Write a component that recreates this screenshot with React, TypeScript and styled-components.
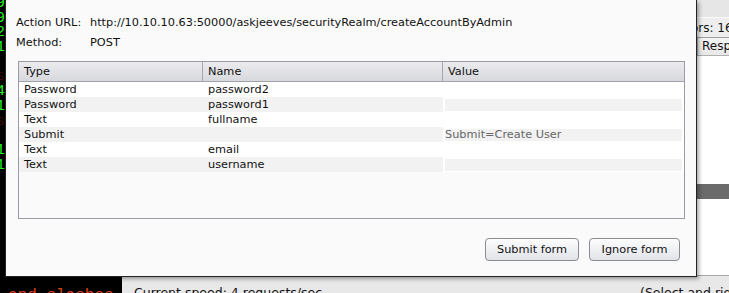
import styled, { createGlobalStyle } from 'styled-components'

// form submission dialog over an intruder attack window

const GlobalStyle = createGlobalStyle`
  html, body {
    margin: 0;
    padding: 0;
    overflow: hidden;
    background: #000;
  }
  body {
    font-family: 'DejaVu Sans', Verdana, sans-serif;
    font-size: 11.3px;
    color: #111;
  }
`

const termLines = [
  { text: '9', tone: 'green' },
  { text: '9', tone: 'green' },
  { text: '2', tone: 'green' },
  { text: '1', tone: 'green' },
  { text: '', tone: 'green' },
  { text: 's', tone: 'dim' },
  { text: '4', tone: 'green' },
  { text: '1', tone: 'green' },
  { text: 's', tone: 'dim' },
  { text: '', tone: 'green' },
  { text: '1', tone: 'green' },
  { text: '1', tone: 'green' },
]

const fields = [
  { type: 'Password', name: 'password2', value: '' },
  { type: 'Password', name: 'password1', value: '' },
  { type: 'Text', name: 'fullname', value: '' },
  { type: 'Submit', name: '', value: 'Submit=Create User' },
  { type: 'Text', name: 'email', value: '' },
  { type: 'Text', name: 'username', value: '' },
]

export default function App() {
  return (
    <Screen>
      <GlobalStyle />
      <Terminal>
        <TermLines>
          {termLines.map((l, i) => (
            <TermLine key={i} $tone={l.tone}>
              {l.text || '\u00a0'}
            </TermLine>
          ))}
        </TermLines>
        <TermTail>and slashes</TermTail>
      </Terminal>
      <AttackWindow>
        <TopStrip />
        <StatsRow>
          <StatsText>Errors: 16</StatsText>
        </StatsRow>
        <ResultsHead>
          <HeadCell />
          <HeadCell>Response received</HeadCell>
        </ResultsHead>
        <ResultsBody $h={128} />
        <Divider />
        <ResultsBody />
        <StatusBar>
          <span>Current speed: 4 requests/sec</span>
          <span>(Select and right-click for more options)</span>
        </StatusBar>
      </AttackWindow>
      <Dialog>
        <InfoGrid>
          <Label>Action URL:</Label>
          <span>http://10.10.10.63:50000/askjeeves/securityRealm/createAccountByAdmin</span>
          <Label>Method:</Label>
          <span>POST</span>
        </InfoGrid>
        <TableBox>
          <HeaderRow>
            <HeaderCell>Type</HeaderCell>
            <HeaderCell>Name</HeaderCell>
            <HeaderCell $last>Value</HeaderCell>
          </HeaderRow>
          {fields.map((f, i) => (
            <Row key={i} $odd={i % 2 === 1}>
              <Cell>{f.type}</Cell>
              <Cell>{f.name}</Cell>
              <ValueCell>
                <ValueField $odd={i % 2 === 1}>{f.value}</ValueField>
              </ValueCell>
            </Row>
          ))}
        </TableBox>
        <Buttons>
          <Button $w={94}>Submit form</Button>
          <Button $w={91}>Ignore form</Button>
        </Buttons>
      </Dialog>
    </Screen>
  )
}

const Screen = styled.div`
  position: relative;
  width: 729px;
  height: 293px;
  overflow: hidden;
  display: grid;
  grid-template-columns: 122px 1fr;
`

const Terminal = styled.div`
  background: #000;
  display: flex;
  flex-direction: column;
  justify-content: space-between;
  overflow: hidden;
`
const TermLines = styled.div`
  display: flex;
  flex-direction: column;
  margin-top: -3px;
`
const TermLine = styled.div<{ $tone: string }>`
  font-family: 'Liberation Mono', monospace;
  font-size: 15px;
  line-height: 14.7px;
  height: 14.7px;
  text-indent: -4px;
  color: ${(p) => (p.$tone === 'dim' ? '#3a0c08' : '#22f022')};
`
const TermTail = styled.div`
  font-family: 'Liberation Mono', monospace;
  font-size: 16px;
  line-height: 16px;
  padding-left: 8px;
  margin-bottom: -11px;
  color: #e2401c;
  white-space: nowrap;
`

const AttackWindow = styled.div`
  display: flex;
  flex-direction: column;
  background: #fff;
  min-width: 0;
`
const TopStrip = styled.div`
  height: 17px;
  flex: none;
  background: #e6e6e6;
  border-bottom: 1px solid #fafafa;
`
const StatsRow = styled.div`
  height: 19px;
  flex: none;
  background: #eeeeee;
  border-bottom: 1px solid #a0a0a0;
  display: flex;
  align-items: center;
  padding-left: 552px;
`
const StatsText = styled.span`
  font-family: 'DejaVu Sans', sans-serif;
  font-size: 12px;
  white-space: nowrap;
`
const ResultsHead = styled.div`
  height: 17px;
  flex: none;
  display: grid;
  grid-template-columns: 575px 1fr;
  background: linear-gradient(#f4f4f4, #e8e8e8);
  border-bottom: 1px solid #b0b0b0;
`
const HeadCell = styled.div`
  font-size: 12px;
  padding-left: 4px;
  line-height: 17px;
  white-space: nowrap;
  overflow: hidden;
  border-left: 1px solid #b0b0b0;
`
const ResultsBody = styled.div<{ $h?: number }>`
  ${(p) => (p.$h ? `height: ${p.$h}px; flex: none;` : 'flex: 1;')}
  background: #fff;
`
const Divider = styled.div`
  height: 15px;
  flex: none;
  background: #6b6b6b;
`
const StatusBar = styled.div`
  box-sizing: border-box;
  height: 18px;
  flex: none;
  border-top: 1px solid #a8a8a8;
  background: #e8e8e8;
  display: grid;
  grid-template-columns: 506px 1fr;
  padding: 9px 0 0 12px;
  font-family: 'DejaVu Sans', sans-serif;
  font-size: 12.5px;
  line-height: 15px;
  white-space: nowrap;
  overflow: hidden;
`

const Dialog = styled.div`
  position: absolute;
  left: 5px;
  top: 0;
  width: 690px;
  height: 264px;
  background: #fafafa;
  border: 1px solid #222;
  border-top: none;
  box-shadow: 2px 2px 4px rgba(0, 0, 0, 0.35);
  display: flex;
  flex-direction: column;
  padding-top: 12px;
`
const InfoGrid = styled.div`
  display: grid;
  grid-template-columns: 74px 1fr;
  grid-auto-rows: 20px;
  align-items: center;
  padding-left: 10px;
  white-space: nowrap;
`
const Label = styled.span``

const TableBox = styled.div`
  margin: 9px 11px 0 12px;
  height: 156px;
  border: 1px solid #9b9ba5;
  background: #fafafa;
  display: flex;
  flex-direction: column;
`
const HeaderRow = styled.div`
  height: 19px;
  display: grid;
  grid-template-columns: 184px 240px 1fr;
  background: linear-gradient(#ececef, #d7d8dd);
  border-bottom: 1px solid #a2a2aa;
`
const HeaderCell = styled.div<{ $last?: boolean }>`
  padding-left: 5px;
  line-height: 19px;
  border-right: ${(p) => (p.$last ? 'none' : '1px solid #a6a6ae')};
`
const Row = styled.div<{ $odd: boolean }>`
  height: 15px;
  display: grid;
  grid-template-columns: 184px 240px 1fr;
  background: ${(p) => (p.$odd ? '#f2f2f2' : '#fff')};
  line-height: 15px;
`
const Cell = styled.div`
  padding-left: 5px;
  white-space: nowrap;
`
const ValueCell = styled.div`
  background: #fff;
  padding: 2px 2px 1px 2px;
`
const ValueField = styled.div<{ $odd: boolean }>`
  height: 12px;
  line-height: 11px;
  background: ${(p) => (p.$odd ? '#f2f2f2' : '#fff')};
  color: #666;
  white-space: nowrap;
`

const Buttons = styled.div`
  display: flex;
  justify-content: flex-end;
  gap: 10px;
  margin-top: 19px;
  padding-right: 16px;
`
const Button = styled.button<{ $w: number }>`
  width: ${(p) => p.$w}px;
  height: 23px;
  border: 1px solid #8a8c92;
  border-radius: 4px;
  background: linear-gradient(#fdfdfd, #e1e3e9);
  font-family: 'DejaVu Sans', Verdana, sans-serif;
  font-size: 11.3px;
  color: #111;
  padding: 0;
`
